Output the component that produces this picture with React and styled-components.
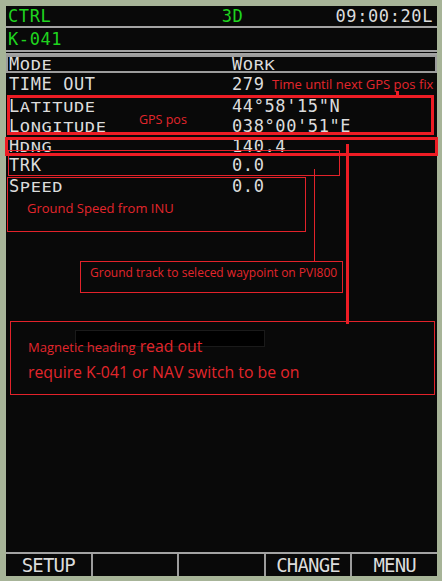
import styled, { createGlobalStyle } from "styled-components";

const GlobalStyle = createGlobalStyle`
  html, body {
    margin: 0;
    padding: 0;
    background: #a7b498;
  }
`;

const Frame = styled.div`
  position: relative;
  width: 442px;
  height: 581px;
  box-sizing: border-box;
  padding: 6px 5px 5px 6px;
  background: #a7b498;
`;

const Screen = styled.div`
  height: 100%;
  display: flex;
  flex-direction: column;
  background: #090909;
  color: #dcdcdc;
  font-family: "DejaVu Sans Mono", "Liberation Mono", monospace;
  font-size: 17px;
  letter-spacing: 0.6px;
`;

const Header = styled.div`
  display: grid;
  grid-template-columns: 1fr auto 1fr;
  height: 20px;
  line-height: 20px;
  padding: 0 4px 0 2px;
  .mid {
    margin-left: 24px;
  }
  .clock {
    text-align: right;
  }
`;

const Green = styled.span`
  color: #1fd41f;
`;

const Rule = styled.div`
  flex: none;
  height: ${(p) => (p.$double ? 5 : 2)}px;
  box-sizing: border-box;
  border-top: 2px solid #a3a3a3;
  border-bottom: ${(p) => (p.$double ? "2px solid #a3a3a3" : "none")};
`;

const Title = styled.div`
  height: 22px;
  line-height: 22px;
  padding-left: 2px;
`;

const Row = styled.div`
  display: grid;
  grid-template-columns: 223px 1fr;
  align-content: start;
  box-sizing: border-box;
  height: ${(p) => p.$h || 20}px;
  padding: 2px 0 0 3px;
  line-height: 16px;
  white-space: nowrap;
`;

const ModeRow = styled(Row)`
  height: 18px;
  line-height: 15px;
  padding: 0 0 0 1px;
  border: 2px solid #9c9c9c;
  margin-bottom: 1px;
`;

/* short capitals of the display font: same advance, lower height */
const Sc = styled.span`
  display: inline-block;
  transform: scaleY(0.8);
  transform-origin: 0 87%;
`;

const Spacer = styled.div`
  flex: 1;
`;

const SoftKeys = styled.div`
  display: grid;
  grid-template-columns: repeat(5, 1fr);
  gap: 2px;
  height: 22px;
  background: #9c9c9c;
`;

const SoftKey = styled.div`
  background: #090909;
  text-align: center;
  line-height: 22px;
  font-size: 19px;
  letter-spacing: -0.8px;
`;

/* ---- red annotation layer drawn over the display ---- */

const Callout = styled.div`
  position: absolute;
  box-sizing: border-box;
  left: ${(p) => p.$x}px;
  top: ${(p) => p.$y}px;
  width: ${(p) => p.$w}px;
  height: ${(p) => p.$h}px;
  border: ${(p) => (p.$thick ? "3px solid #ed1c24" : "1px solid #e2222a")};
  padding: ${(p) => p.$pad || "0"};
`;

const Leader = styled.div`
  position: absolute;
  left: ${(p) => p.$x}px;
  top: ${(p) => p.$y}px;
  width: ${(p) => (p.$thick ? 3 : 1)}px;
  height: ${(p) => p.$h}px;
  background: ${(p) => (p.$thick ? "#ed1c24" : "#e2222a")};
`;

const Note = styled.div`
  position: ${(p) => (p.$free ? "absolute" : "static")};
  left: ${(p) => p.$x}px;
  top: ${(p) => p.$y}px;
  font-family: "Open Sans", "Noto Sans", sans-serif;
  font-size: ${(p) => p.$size || 13}px;
  line-height: ${(p) => (p.$size || 13) + 4}px;
  color: #e3262c;
  white-space: nowrap;
`;

const Smudge = styled.div`
  position: absolute;
  left: 64px;
  top: 8px;
  width: 190px;
  height: 17px;
  background: #000;
  border: 1px solid #1a1a1a;
  box-sizing: border-box;
`;

const MagLine = styled.div`
  position: relative;
  line-height: 18px;
  font-size: 15.8px;
  margin-top: ${(p) => p.$gap || 0}px;
  span.small {
    font-size: 13px;
  }
`;

export default function App() {
  return (
    <>
      <GlobalStyle />
      <Frame>
        <Screen>
          <Header>
            <Green>CTRL</Green>
            <Green className="mid">3D</Green>
            <span className="clock">09:00:20L</span>
          </Header>
          <Rule />
          <Title>
            <Green>K-041</Green>
          </Title>
          <Rule $double />
          <ModeRow>
            <span>
              M<Sc>ODE</Sc>
            </span>
            <span>
              W<Sc>ORK</Sc>
            </span>
          </ModeRow>
          <Row $h={22}>
            <span>TIME OUT</span>
            <span>279</span>
          </Row>
          <Row>
            <span>
              L<Sc>ATITUDE</Sc>
            </span>
            <span>44°58'15"N</span>
          </Row>
          <Row>
            <span>
              L<Sc>ONGITUDE</Sc>
            </span>
            <span>038°00'51"E</span>
          </Row>
          <Row $h={19}>
            <span>
              H<Sc>DNG</Sc>
            </span>
            <span>140.4</span>
          </Row>
          <Row $h={21}>
            <span>TRK</span>
            <span>0.0</span>
          </Row>
          <Row>
            <span>
              S<Sc>PEED</Sc>
            </span>
            <span>0.0</span>
          </Row>
          <Spacer />
          <Rule />
          <SoftKeys>
            <SoftKey>SETUP</SoftKey>
            <SoftKey />
            <SoftKey />
            <SoftKey>CHANGE</SoftKey>
            <SoftKey>MENU</SoftKey>
          </SoftKeys>
        </Screen>

        <Note $free $x={272} $y={76} $size={13}>
          Time until next GPS pos fix
        </Note>
        <Leader $x={396} $y={91} $h={5} $thick />
        <Callout $x={7} $y={95} $w={427} $h={40} $thick $pad="14px 0 0 129px">
          <Note $size={12.5}>GPS pos</Note>
        </Callout>
        <Callout $x={8} $y={150} $w={332} $h={26} />
        <Callout $x={5} $y={137} $w={433} $h={19} $thick />
        <Leader $x={346} $y={144} $h={180} $thick />
        <Leader $x={314} $y={169} $h={92} />
        <Callout $x={7} $y={177} $w={299} $h={55} $pad="22px 0 0 19px">
          <Note $size={13}>Ground Speed from INU</Note>
        </Callout>
        <Callout $x={80} $y={261} $w={263} $h={32} $pad="3px 0 0 9px">
          <Note $size={12}>Ground track to seleced waypoint on PVI800</Note>
        </Callout>
        <Callout $x={10} $y={321} $w={425} $h={74} $pad="15px 0 0 17px">
          <Smudge />
          <Note>
            <MagLine>
              <span className="small">Magnetic heading</span> read out
            </MagLine>
            <MagLine $gap={7}>require K-041 or NAV switch to be on</MagLine>
          </Note>
        </Callout>
      </Frame>
    </>
  );
}
